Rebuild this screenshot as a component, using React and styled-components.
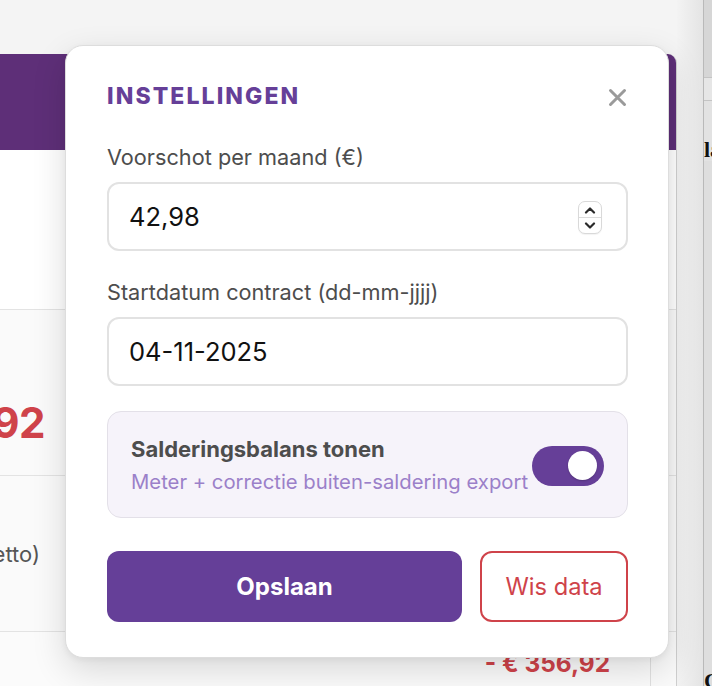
import React, { useState } from "react";
import styled, { createGlobalStyle } from "styled-components";

const GlobalStyle = createGlobalStyle`
  html, body { margin: 0; padding: 0; }
  body {
    background: #f4f4f4;
    font-family: Inter, "Noto Sans", "Liberation Sans", sans-serif;
    overflow: hidden;
  }
  * { box-sizing: border-box; }
`;

const Page = styled.div`
  position: relative;
  display: flex;
  width: 712px;
  height: 686px;
  overflow: hidden;
  background: #f4f4f4;
`;

const MainCol = styled.div`
  flex: 0 0 697px;
  margin-left: -20px;
  padding-top: 54px;
`;

const Card = styled.div`
  background: #ffffff;
  border-right: 1px solid #cfcfcf;
  border-top-right-radius: 9px;
  overflow: hidden;
  height: 100%;
  display: flex;
  flex-direction: column;
`;

const CardHeader = styled.div`
  height: 96px;
  background: #5e2f78;
  flex: 0 0 auto;
`;

const Rows = styled.div`
  flex: 1;
  display: flex;
  flex-direction: column;
`;

const Row = styled.div`
  height: ${(p) => p.$h}px;
  flex: 0 0 auto;
  display: flex;
  align-items: ${(p) => p.$align || "center"};
  padding-top: ${(p) => p.$pt || 0}px;
  border-top: ${(p) => (p.$line ? "1px solid #e3e3e3" : "none")};
  background: ${(p) => p.$bg || "#ffffff"};
`;

const LeftCell = styled.div`
  flex: 0 0 ${(p) => p.$w}px;
  min-width: 0;
  display: flex;
  justify-content: flex-end;
  white-space: nowrap;
`;

const BigAmount = styled.span`
  flex: 0 0 auto;
  font-family: Inter, "Liberation Sans", sans-serif;
  font-weight: 700;
  font-size: 42px;
  line-height: 1;
  color: #cf434a;
  letter-spacing: -0.5px;
`;

const RowLabel = styled.span`
  flex: 0 0 auto;
  font-size: 22px;
  color: #555555;
`;

const BottomRow = styled.div`
  flex: 1;
  display: flex;
  border-top: 1px solid #e3e3e3;
  background: #fbfbfb;
`;

const BottomMain = styled.div`
  flex: 1;
  display: flex;
  justify-content: flex-end;
  padding: 16px 40px 0 0;
`;

const BottomSide = styled.div`
  flex: 0 0 26px;
  border-left: 1px solid #e0e0e0;
  background: #fafafa;
`;

const SmallAmount = styled.span`
  font-weight: 700;
  font-size: 24.4px;
  color: #cf434a;
`;

const Gutter = styled.div`
  flex: 0 0 26px;
  background: linear-gradient(to right, #f3f3f3, #e4e4e4);
`;

const SidePanel = styled.div`
  flex: 1;
  border-left: 1px solid #b9b9b9;
  background: #dcdcdc;
  display: flex;
  flex-direction: column;
  font-family: "Liberation Serif", serif;
  font-weight: 700;
  color: #111;
  font-size: 22px;
  overflow: hidden;
`;

const SideBand = styled.div`
  height: ${(p) => p.$h}px;
  flex: 0 0 auto;
  background: ${(p) => p.$bg};
  border-bottom: ${(p) => (p.$line ? "1px solid #c4c4c4" : "none")};
  padding-top: ${(p) => p.$pt || 0}px;
  white-space: nowrap;
  line-height: 1;
`;

const SideFill = styled.div`
  flex: 1;
  background: #dedede;
  display: flex;
  align-items: flex-end;
  line-height: 1;
  margin-bottom: -6px;
  white-space: nowrap;
`;

/* Modal */
const Modal = styled.div`
  position: absolute;
  left: 65px;
  top: 45px;
  width: 604px;
  height: 613px;
  background: #ffffff;
  border: 1px solid #dddddd;
  border-radius: 18px;
  box-shadow: 0 12px 34px rgba(0, 0, 0, 0.14), 0 2px 6px rgba(0, 0, 0, 0.05);
  padding: 35px 40px 33px 41px;
  display: flex;
  flex-direction: column;
`;

const TitleRow = styled.div`
  display: flex;
  align-items: center;
  justify-content: space-between;
  height: 30px;
  margin-bottom: 33px;
`;

const Title = styled.h2`
  margin: 0;
  font-size: 23px;
  font-weight: 800;
  letter-spacing: 2.1px;
  color: #663f98;
`;

const CloseButton = styled.button`
  border: none;
  background: none;
  padding: 0;
  width: 22px;
  height: 22px;
  margin-top: 3px;
  display: flex;
  align-items: center;
  justify-content: center;
  cursor: pointer;
`;

const Field = styled.div`
  display: flex;
  flex-direction: column;
  margin-bottom: ${(p) => p.$mb}px;
`;

const Label = styled.label`
  font-size: 21.7px;
  line-height: 26px;
  color: #4d4d4d;
  margin-bottom: 12px;
`;

const InputWrap = styled.div`
  height: 69px;
  border: 2px solid #e2e2e2;
  border-radius: 12px;
  display: flex;
  align-items: center;
  padding: 0 24px 0 20px;
`;

const Input = styled.input`
  flex: 1;
  border: none;
  outline: none;
  background: transparent;
  font-family: Inter, "Liberation Sans", sans-serif;
  font-size: 25.5px;
  color: #111111;
  padding: 0;
  min-width: 0;
`;

const Spinner = styled.div`
  width: 24px;
  height: 33px;
  border: 1px solid #d9d9d9;
  border-radius: 7px;
  display: flex;
  flex-direction: column;
  overflow: hidden;
  background: #fff;
  box-shadow: 0 1px 1px rgba(0, 0, 0, 0.05);
  margin-top: 2px;
`;

const SpinHalf = styled.div`
  flex: 1;
  display: flex;
  align-items: center;
  justify-content: center;
  border-top: ${(p) => (p.$divider ? "1px solid #dcdcdc" : "none")};
`;

const ToggleBox = styled.div`
  height: 107px;
  border: 1px solid #e3e0e8;
  background: #f6f3fa;
  border-radius: 14px;
  display: flex;
  align-items: center;
  padding: 0 23px 0 23px;
  margin-bottom: 33px;
`;

const ToggleText = styled.div`
  flex: 1;
  display: flex;
  flex-direction: column;
  gap: 8px;
  min-width: 0;
`;

const ToggleTitle = styled.div`
  font-size: 22px;
  font-weight: 700;
  color: #4d4d4d;
  line-height: 26px;
`;

const ToggleSub = styled.div`
  font-size: 20.3px;
  color: #9b80c9;
  line-height: 24px;
  white-space: nowrap;
`;

const Switch = styled.button`
  flex: 0 0 72px;
  height: 40px;
  border-radius: 20px;
  border: none;
  padding: 0 7px;
  background: ${(p) => (p.$on ? "#663f98" : "#cccccc")};
  display: flex;
  align-items: center;
  justify-content: ${(p) => (p.$on ? "flex-end" : "flex-start")};
  cursor: pointer;
  margin-top: 2px;
`;

const Knob = styled.span`
  width: 29px;
  height: 29px;
  border-radius: 50%;
  background: #ffffff;
  box-shadow: 0 1px 2px rgba(0, 0, 0, 0.2);
`;

const Actions = styled.div`
  display: flex;
  gap: 18px;
  height: 71px;
`;

const PrimaryButton = styled.button`
  flex: 1;
  border: none;
  border-radius: 12px;
  background: #653f98;
  color: #ffffff;
  font-family: Inter, "Liberation Sans", sans-serif;
  font-weight: 700;
  font-size: 24px;
  cursor: pointer;
`;

const DangerButton = styled.button`
  flex: 0 0 148px;
  border: 2px solid #cf434a;
  border-radius: 12px;
  background: #ffffff;
  color: #cf434a;
  font-family: Inter, "Liberation Sans", sans-serif;
  font-weight: 400;
  font-size: 23.7px;
  cursor: pointer;
`;

const Chevron = ({ up }) => (
  <svg width="12" height="8" viewBox="0 0 12 8">
    <path
      d={up ? "M2 6.5 L6 2.5 L10 6.5" : "M2 1.5 L6 5.5 L10 1.5"}
      fill="none"
      stroke="#2a2a2a"
      strokeWidth="2.2"
      strokeLinecap="round"
      strokeLinejoin="round"
    />
  </svg>
);

export default function App() {
  const [on, setOn] = useState(true);
  const [amount, setAmount] = useState("42,98");
  const [date, setDate] = useState("04-11-2025");
  return (
    <>
      <GlobalStyle />
      <Page>
        <MainCol>
          <Card>
            <CardHeader />
            <Rows>
              <Row $h={159} />
              <Row $h={166} $line $bg="#fafafa" $align="flex-start" $pt={92}>
                <LeftCell $w={65}>
                  <BigAmount>€ 356,92</BigAmount>
                </LeftCell>
              </Row>
              <Row $h={156} $line $bg="#fafafa">
                <LeftCell $w={60}>
                  <RowLabel>Saldo (netto)</RowLabel>
                </LeftCell>
              </Row>
              <BottomRow>
                <BottomMain>
                  <SmallAmount>- € 356,92</SmallAmount>
                </BottomMain>
                <BottomSide />
              </BottomRow>
            </Rows>
          </Card>
        </MainCol>
        <Gutter />
        <SidePanel>
          <SideBand $h={78} $bg="#d6d6d6" $line />
          <SideBand $h={23} $bg="#e6e6e6" $line />
          <SideBand $h={60} $bg="#e2e2e2" $pt={38}>
            laatste
          </SideBand>
          <SideFill>Co</SideFill>
        </SidePanel>

        <Modal>
          <TitleRow>
            <Title>INSTELLINGEN</Title>
            <CloseButton aria-label="Sluiten">
              <svg width="19" height="19" viewBox="0 0 19 19">
                <path
                  d="M2.5 2.5 L16.5 16.5 M16.5 2.5 L2.5 16.5"
                  stroke="#9a9a9a"
                  strokeWidth="3"
                  strokeLinecap="round"
                />
              </svg>
            </CloseButton>
          </TitleRow>
          <Field $mb={28}>
            <Label>Voorschot per maand (€)</Label>
            <InputWrap>
              <Input value={amount} onChange={(e) => setAmount(e.target.value)} />
              <Spinner>
                <SpinHalf>
                  <Chevron up />
                </SpinHalf>
                <SpinHalf $divider>
                  <Chevron />
                </SpinHalf>
              </Spinner>
            </InputWrap>
          </Field>
          <Field $mb={25}>
            <Label>Startdatum contract (dd-mm-jjjj)</Label>
            <InputWrap>
              <Input value={date} onChange={(e) => setDate(e.target.value)} />
            </InputWrap>
          </Field>
          <ToggleBox>
            <ToggleText>
              <ToggleTitle>Salderingsbalans tonen</ToggleTitle>
              <ToggleSub>Meter + correctie buiten-saldering export</ToggleSub>
            </ToggleText>
            <Switch $on={on} onClick={() => setOn(!on)} aria-pressed={on}>
              <Knob />
            </Switch>
          </ToggleBox>
          <Actions>
            <PrimaryButton>Opslaan</PrimaryButton>
            <DangerButton>Wis data</DangerButton>
          </Actions>
        </Modal>
      </Page>
    </>
  );
}
